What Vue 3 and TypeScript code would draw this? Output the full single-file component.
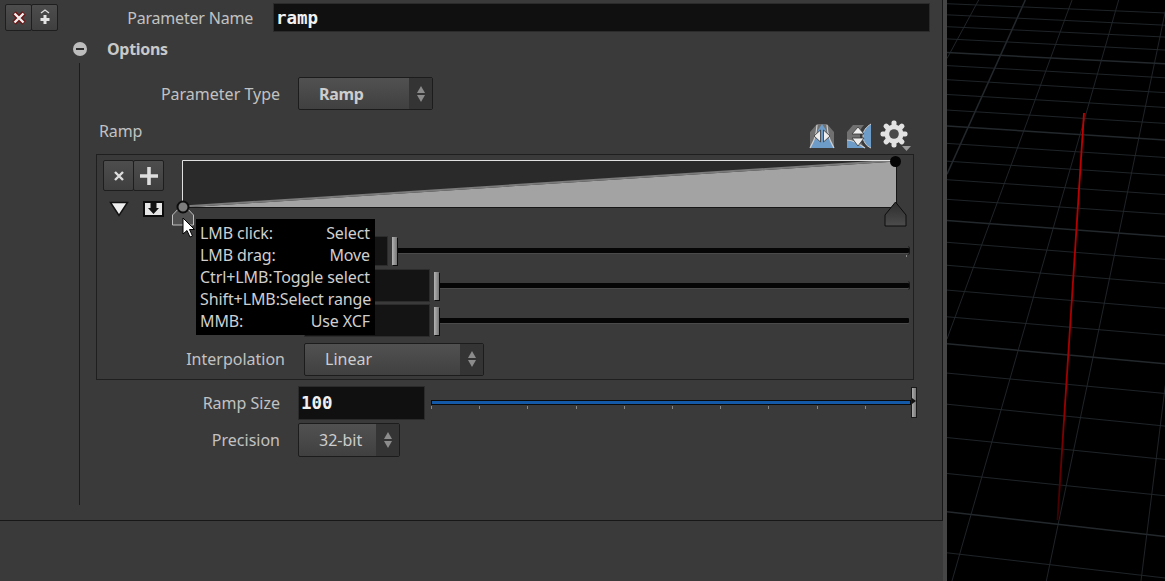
<script setup lang="ts">
const ticks: number[] = Array.from({ length: 11 }, (_, i) => i);
const sx = (x: number): number => (x - 50) / 3;
const sy = (y: number): number => y * 0.3705;
const lefts = [10, 40, 72, 105, 142, 177, 215, 255, 297, 340, 387, 435, 485, 538, 595, 654, 716, 783, 855, 928, 1007, 1091, 1181, 1278, 1381, 1492];
const rights = [35, 68, 100, 135, 172, 210, 250, 290, 333, 378, 425, 473, 525, 578, 638, 700, 765, 832, 905, 982, 1062, 1150, 1240, 1338, 1448, 1560];
const hLines = lefts.map((l, i) => ({ y1: sy(l), y2: sy(rights[i]), w: i % 5 === 4 ? 1.5 : 0.9 }));
const vLines: [number, number, number, number, number][] = [
  [50, 158, 145, 0, 0.9], [50, 470, 285, 0, 1.5], [50, 915, 425, 0, 0.9],
  [65, 1568, 565, 0, 0.9], [348, 1568, 712, 0, 0.9], [632, 1568, 705, 1040, 0.9]
];
const vMapped = vLines.map(v => ({ x1: sx(v[0]), y1: sy(v[1]), x2: sx(v[2]), y2: sy(v[3]), w: v[4] }));
const teeth: number[] = [0, 45, 90, 135, 180, 225, 270, 315];
const tipRows: [string, string][] = [
  ['LMB click:', 'Select'], ['LMB drag:', 'Move'], ['Ctrl+LMB:', 'Toggle select'],
  ['Shift+LMB:', 'Select range'], ['MMB:', 'Use XCF']
];
</script>

<template>
  <div class="screen">
    <section class="panel">
      <div class="top-row">
        <div class="btn-pair">
          <button class="tool-btn">
            <svg width="16" height="16" viewBox="0 0 16 16"><path d="M3 3 L13 13 M13 3 L3 13" stroke="#6e1414" stroke-width="5"/><path d="M3.5 3.5 L12.5 12.5 M12.500 3.500 L3.500 12.500" stroke="#eee" stroke-width="2.4"/></svg>
          </button>
          <button class="tool-btn">
            <svg width="16" height="18" viewBox="0 0 16 18"><path d="M4 4 L8 1 L12 4" fill="none" stroke="#ddd" stroke-width="1.4"/><path d="M8 6 V15 M3.5 10.5 H12.5" stroke="#e4e4e4" stroke-width="3"/></svg>
          </button>
        </div>
        <label class="lbl name-lbl">Parameter Name</label>
        <div class="field name-field">ramp</div>
      </div>

      <div class="folder-row">
        <span class="minus"></span>
        <strong>Options</strong>
      </div>

      <div class="folder-body">
        <div class="type-row">
          <label class="lbl type-lbl">Parameter Type</label>
          <div class="drop type-drop"><b>Ramp</b><span class="spin"><i class="up"></i><i class="down"></i></span></div>
        </div>

        <div class="ramp-head">
          <span class="ramp-title">Ramp</span>
          <div class="ramp-icons">
            <svg width="28" height="28" viewBox="0 0 28 28">
              <path d="M2 26 L2 10 L9 2 H19 L26 10 V26 Z" fill="#707070"/>
              <path d="M2 26 C5 18 9 18 10 8 L14 2 L18 8 C19 18 23 18 26 26 Z" fill="#6d9cc9"/>
              <path d="M2 26 C6 18 8 16 9 3 M26 26 C22 18 20 16 19 3" fill="none" stroke="#cfcfcf" stroke-width="1.200"/>
              <path d="M12.500 8 V20 L6 14 Z M15.500 8 V20 L22 14 Z" fill="#eee" stroke="#333" stroke-width=".8"/>
            </svg>
            <svg width="28" height="28" viewBox="0 0 28 28">
              <path d="M3 10 L9 3 H20 C16 7 16 10 16 14 C16 19 18 23 21 26 H3 Z" fill="#707070"/>
              <path d="M3 18 C9 18 14 21 21 26 H3 Z" fill="#6d9cc9"/>
              <path d="M27 2 C22 5 19 9 19 14 C19 19 22 24 27 26 Z" fill="#6d9cc9"/>
              <path d="M3 18 C9 18 14 21 21 26" fill="none" stroke="#cfcfcf" stroke-width="1.200"/>
              <path d="M27 2 C22 5 19 9 19 14 C19 19 22 24 27 26" fill="none" stroke="#cfcfcf" stroke-width="1"/>
              <path d="M14 5 L20 12 H8 Z M14 24 L20 16 H8 Z" fill="#eee" stroke="#333" stroke-width=".8"/>
            </svg>
            <svg class="gear" width="32" height="32" viewBox="0 0 32 32">
              <rect v-for="a in teeth" :key="a" x="11.500" y="0.500" width="5" height="10" rx="2" fill="#e2e2e2" :transform="`rotate(${a} 14 14)`"/>
              <circle cx="14" cy="14" r="7.500" fill="none" stroke="#e2e2e2" stroke-width="4"/>
              <circle cx="14" cy="14" r="4.800" fill="#4a4a4a"/>
              <path d="M22 26 H31 L26.500 31 Z" fill="#9a9a9a"/>
            </svg>
          </div>
        </div>

        <div class="ramp-box">
          <div class="ramp-left">
            <div class="btn-pair small">
              <button class="tool-btn">
                <svg width="12" height="12" viewBox="0 0 12 12"><path d="M2 2 L10 10 M10 2 L2 10" stroke="#ddd" stroke-width="2.4"/></svg>
              </button>
              <button class="tool-btn">
                <svg width="20" height="20" viewBox="0 0 20 20"><path d="M10 1 V19 M1 10 H19" stroke="#ddd" stroke-width="3.600"/></svg>
              </button>
            </div>
            <div class="ramp-tools">
              <svg width="20" height="16" viewBox="0 0 20 16"><path d="M1.500 1.500 H18.500 L10 14.500 Z" fill="#eee" stroke="#111" stroke-width="1.500"/></svg>
              <svg width="21" height="16" viewBox="0 0 21 16"><rect width="21" height="16" fill="#0c0c0c"/><rect x="2" y="2" width="17" height="12" fill="#e6e6e6"/><path d="M7.500 2 H13.500 V7 H16 L10.500 13 L5 7 H7.500 Z" fill="#111"/></svg>
            </div>
          </div>

          <div class="ramp-main">
            <div class="ramp-canvas">
              <svg class="ramp-svg" width="730" height="70" viewBox="0 0 730 70">
                <defs>
                  <linearGradient id="hnd" x1="0" x2="0" y1="0" y2="1">
                    <stop offset="0" stop-color="#2d2d2d"/>
                    <stop offset="1" stop-color="#4c4c4c"/>
                  </linearGradient>
                </defs>
                <rect x="1" y="1" width="713" height="47" fill="#2a2a2a"/>
                <path d="M1 47.500 L714 1.500 V47.500 Z" fill="#a3a3a3"/>
                <path d="M1 46.500 L714 .500" stroke="#7b7b7b" stroke-width="2" fill="none"/>
                <path d="M.500 47 V.500 H714" fill="none" stroke="#e0e0e0" stroke-width="1"/>
                <path d="M714.500 1 V47.500 H1" fill="none" stroke="#161616" stroke-width="1"/>
                <circle cx="713.500" cy="1.500" r="5.500" fill="#050505"/>
                <path d="M703 66 V55 L713.500 42 L724 55 V66 Z" fill="url(#hnd)" stroke="#0c0c0c" stroke-width="1"/>
                <path d="M-9.500 65 V55 L1 44 L11.500 55 V65 Z" fill="#505050" stroke="#c0c0c0" stroke-width="1"/>
                <circle cx="1" cy="47" r="5.500" fill="#7c7c7c" stroke="#0c0c0c" stroke-width="2"/>
              </svg>
            </div>

            <div class="slider-stack">
              <div class="val-row">
                <div class="mini-field first"></div>
                <div class="track-wrap">
                  <span class="handle"></span>
                  <span class="track"></span>
                  <span class="cap"></span>
                  <span class="end-tick"></span>
                </div>
              </div>
              <div class="val-row">
                <div class="mini-field"></div>
                <div class="track-wrap">
                  <span class="handle"></span>
                  <span class="track"></span>
                  <span class="cap"></span>
                </div>
              </div>
              <div class="val-row">
                <div class="mini-field"></div>
                <div class="track-wrap">
                  <span class="handle"></span>
                  <span class="track"></span>
                </div>
              </div>
            </div>

            <div class="interp-row">
              <label class="lbl interp-lbl">Interpolation</label>
              <div class="drop interp-drop"><span>Linear</span><span class="spin"><i class="up"></i><i class="down"></i></span></div>
            </div>
          </div>
        </div>

        <div class="size-row">
          <label class="lbl size-lbl">Ramp Size</label>
          <div class="field size-field">100</div>
          <div class="size-slider">
            <span class="blue"></span>
            <span class="tick" v-for="t in ticks" :key="t"></span>
            <span class="big-handle"></span>
          </div>
        </div>
        <div class="prec-row">
          <label class="lbl size-lbl">Precision</label>
          <div class="drop prec-drop"><span>32-bit</span><span class="spin"><i class="up"></i><i class="down"></i></span></div>
        </div>
      </div>
    </section>

    <aside class="viewport">
      <svg width="218" height="581" viewBox="0 0 218 581">
        <defs>
          <linearGradient id="redFade" gradientUnits="userSpaceOnUse" x1="0" x2="0" y1="113" y2="520">
            <stop offset="0" stop-color="#c40000"/>
            <stop offset=".7" stop-color="#a00000"/>
            <stop offset="1" stop-color="#3a0000"/>
          </linearGradient>
        </defs>
        <g stroke="#23282c">
          <line v-for="(l, i) in hLines" :key="'h' + i" x1="0" :y1="l.y1" x2="218" :y2="l.y2" :stroke-width="l.w" />
          <line v-for="(v, i) in vMapped" :key="'v' + i" :x1="v.x1" :y1="v.y1" :x2="v.x2" :y2="v.y2" :stroke-width="v.w" />
        </g>
        <path d="M137 113 L110.500 520" stroke="url(#redFade)" stroke-width="1.800" fill="none"/>
      </svg>
    </aside>

    <div class="tooltip">
      <div class="tip-row" v-for="r in tipRows" :key="r[0]"><span>{{ r[0] }}</span><span>{{ r[1] }}</span></div>
    </div>
    <svg class="cursor" width="14" height="22" viewBox="0 0 14 22"><path d="M1 1 V17 L5 13.500 L8 20 L10.500 19 L7.500 12.500 L12.500 12.500 Z" fill="#fff" stroke="#000" stroke-width="1"/></svg>
  </div>
</template>

<style>
html, body { margin: 0; background: #3a3a3a; }
</style>

<style scoped>
.screen {
  position: relative;
  width: 1165px;
  height: 581px;
  overflow: hidden;
  display: flex;
  background: #3a3a3a;
  color: #c6c6c6;
  font-family: "Noto Sans", "Open Sans", sans-serif;
  font-size: 16px;
}
.panel {
  box-sizing: border-box;
  width: 943px;
  height: 521px;
  border-right: 1px solid #171717;
  border-bottom: 1px solid #171717;
  padding-top: 3px;
  flex: none;
}
.viewport {
  box-sizing: content-box;
  border-left: 4px solid #464646;
  flex: 1;
  height: 581px;
  background: #000;
}
.viewport svg { display: block; }
.lbl { display: block; color: #c2c2c2; text-align: right; white-space: nowrap; letter-spacing: 0; }
.top-row { display: flex; align-items: center; height: 29px; padding-left: 5px; }
.btn-pair { display: flex; height: 27px; }
.tool-btn {
  box-sizing: border-box;
  width: 27px;
  height: 100%;
  padding: 0;
  display: flex;
  align-items: center;
  justify-content: center;
  background: linear-gradient(#4d4d4d, #3f3f3f);
  border: 1px solid #1e1e1e;
  border-radius: 2px;
}
.tool-btn + .tool-btn { margin-left: -1px; }
.name-lbl { width: 195px; letter-spacing: -0.2px; }
.field {
  box-sizing: border-box;
  background: #101010;
  border: 1px solid #2b2b2b;
  color: #f1f1f1;
  font-family: "DejaVu Sans Mono", "Liberation Mono", monospace;
  font-weight: 700;
  font-size: 17.500px;
  display: flex;
  align-items: center;
  padding-left: 2px;
}
.name-field { width: 657px; height: 29px; margin-left: 20px; }
.folder-row { display: flex; align-items: center; height: 26px; margin-top: 4px; padding-left: 73px; }
.minus {
  width: 14px; height: 14px; border-radius: 50%; background: #bdbdbd; position: relative; margin-right: 20px;
}
.minus::after { content: ""; position: absolute; left: 3px; right: 3px; top: 6px; height: 2px; background: #2e2e2e; }
.folder-row strong { font-weight: 700; color: #c9c9c9; letter-spacing: -0.3px; }
.folder-body {
  margin-left: 79px;
  border-left: 1px solid #1b1b1b;
  height: 442px;
  margin-top: 1px;
  box-sizing: border-box;
  padding-top: 14px;
}
.type-row { display: flex; align-items: center; height: 33px; }
.type-lbl { width: 200px; }
.drop {
  box-sizing: border-box;
  display: flex;
  align-items: center;
  background: linear-gradient(#515151, #404040);
  border: 1px solid #1c1c1c;
  border-radius: 2px;
  color: #cdcdcd;
  position: relative;
}
.drop > :first-child { flex: 1; text-align: left; }
.spin {
  width: 23px; flex: none !important; align-self: stretch; background: #343434;
  display: flex; flex-direction: column; align-items: center; justify-content: center; gap: 2px;
}
.spin i { display: block; width: 0; height: 0; border-left: 4.500px solid transparent; border-right: 4.500px solid transparent; }
.spin .up { border-bottom: 7px solid #8c8c8c; }
.spin .down { border-top: 7px solid #8c8c8c; }
.type-drop { width: 135px; height: 33px; margin-left: 18px; padding-left: 20px; }
.type-drop b { font-weight: 700; letter-spacing: -0.3px; }
.ramp-head { display: flex; align-items: center; justify-content: space-between; height: 44px; padding: 0 30px 0 19px; }
.ramp-title { color: #c2c2c2; letter-spacing: -0.1px; margin-top: -2px; }
.ramp-icons { display: flex; gap: 8px; align-items: center; margin-top: 7px; }
.ramp-box {
  box-sizing: border-box;
  display: flex;
  width: 818px;
  height: 226px;
  margin-left: 16px;
  border: 1px solid #1f1f1f;
  padding: 5px 0 0 7px;
}
.ramp-left { width: 78px; flex: none; margin-left: -1px; margin-right: 1px; }
.btn-pair.small { height: 31px; }
.btn-pair.small .tool-btn { width: 31px; }
.ramp-tools { display: flex; align-items: center; gap: 14px; padding: 10px 0 0 6px; }
.ramp-main { position: relative; flex: 1; min-width: 0; }
.ramp-svg { position: absolute; left: 0; top: 0; overflow: visible; }
.ramp-canvas { height: 70px; }
.slider-stack { margin-top: 3px; }
.val-row { display: flex; align-items: center; height: 35px; padding-left: 122px; }
.mini-field {
  box-sizing: border-box; width: 126px; height: 33px; background: #141414; border: 1px solid #2c2c2c; flex: none;
}
.mini-field.first { width: 84px; height: 30px; }
.track-wrap { display: flex; align-items: center; position: relative; flex: 1; height: 30px; }
.handle {
  width: 5px; height: 28px; background: linear-gradient(90deg, #b4b4b4, #757575); box-shadow: 1px 1px 0 #0e0e0e; flex: none; margin-left: 4px; z-index: 1;
}
.track { flex: 1; height: 5px; background: #050505; border-radius: 1px; margin-right: 4px; box-shadow: 0 1px 0 #4a4a4a; }
.cap { position: absolute; right: 3px; width: 3px; height: 9px; border-right: 1px solid #111; border-radius: 50%; }
.end-tick { position: absolute; right: 6px; top: 19px; width: 1px; height: 2px; background: #888; }
.interp-row { display: flex; align-items: center; height: 32px; margin-top: 5px; }
.interp-lbl { width: 103px; }
.interp-drop { width: 180px; height: 33px; margin-left: 19px; padding-left: 20px; }
.size-row { display: flex; align-items: center; height: 34px; margin-top: 6px; }
.size-lbl { width: 200px; }
.size-field { width: 127px; height: 34px; margin-left: 18px; }
.size-slider {
  position: relative; width: 486px; margin-left: 6px; height: 34px; display: flex; justify-content: space-between; align-items: flex-end; padding: 0 3px 11px 0; box-sizing: border-box;
}
.blue { position: absolute; left: 0; right: 6px; top: 14px; background: #1458a8; border: 1px solid #0a0a0a; box-sizing: content-box; height: 3px; }
.tick { width: 1px; height: 3px; background: #888; }
.big-handle { position: absolute; right: 0; top: 1px; box-sizing: border-box; width: 6px; height: 31px; background: linear-gradient(90deg, #adadad, #777); border: 1px solid #1a1a1a; }
.big-handle::after { content: ""; position: absolute; left: 0; top: 10px; width: 0; height: 0; border-left: 4px solid #111; border-top: 3px solid transparent; border-bottom: 3px solid transparent; }
.prec-row { display: flex; align-items: center; height: 34px; margin-top: 3px; }
.prec-drop { width: 102px; height: 34px; margin-left: 18px; padding-left: 20px; }
.tooltip {
  position: absolute;
  left: 196px;
  top: 219px;
  width: 179px;
  height: 116px;
  box-sizing: border-box;
  padding: 3px 5px 3px 4px;
  background: #000;
  color: #cfcfcf;
  letter-spacing: -0.1px;
}
.tip-row { display: flex; justify-content: space-between; height: 22px; line-height: 22px; white-space: nowrap; }
.cursor { position: absolute; left: 182px; top: 217px; }
</style>
